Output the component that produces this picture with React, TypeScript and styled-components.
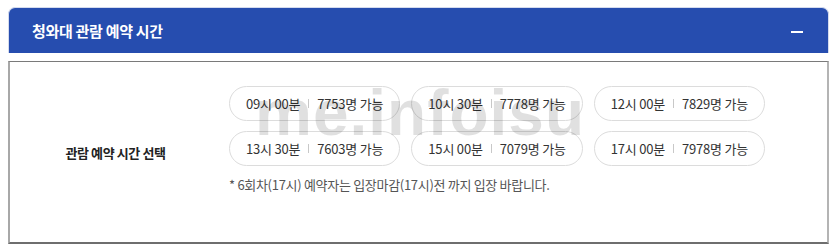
import * as React from 'react';
import styled, { createGlobalStyle } from 'styled-components';

const GlobalStyle = createGlobalStyle`
  * { box-sizing: border-box; }
  body {
    margin: 0;
    background: #fff;
    font-family: "Noto Sans CJK KR", "Noto Sans", sans-serif;
  }
`;

const slots = [
  { time: '09시 00분', count: '7753명 가능' },
  { time: '10시 30분', count: '7778명 가능' },
  { time: '12시 00분', count: '7829명 가능' },
  { time: '13시 30분', count: '7603명 가능' },
  { time: '15시 00분', count: '7079명 가능' },
  { time: '17시 00분', count: '7978명 가능' },
];

const Page = styled.div`
  padding: 7px 8px 0 8px;
  width: 837px;
  position: relative;
`;

const Header = styled.div`
  height: 46px;
  background: #264daf;
  border: 1px solid #d4dbee;
  border-bottom: none;
  border-radius: 7px 7px 0 0;
  display: flex;
  align-items: center;
  justify-content: space-between;
  padding: 0 25px 0 23px;
`;

const Title = styled.h2`
  margin: 0;
  color: #fff;
  font-size: 15px;
  font-weight: 700;
  letter-spacing: -0.3px;
`;

const Minus = styled.span`
  display: block;
  width: 12px;
  height: 2px;
  background: #fff;
  margin-top: 2px;
`;

const Body = styled.div`
  margin-top: 8px;
  height: 183px;
  border: 1px solid #7a7a7a;
  border-left: 2px solid #a8a8a8;
  border-right: 2px solid #b4b4b4;
  border-bottom: 2px solid #6e6e6e;
  display: grid;
  grid-template-columns: 211px 1fr;
  align-items: center;
`;

const Label = styled.div`
  text-align: center;
  font-size: 13px;
  font-weight: 700;
  color: #222;
  letter-spacing: -0.4px;
`;

const Content = styled.div`
  align-self: start;
  padding: 24px 0 0 8px;
`;

const SlotList = styled.div`
  display: flex;
  flex-wrap: wrap;
  column-gap: 11px;
  row-gap: 10px;
  width: 560px;
`;

const Slot = styled.button`
  height: 35px;
  padding: 0 16px;
  border: 1px solid #dcdcdc;
  border-radius: 18px;
  background: transparent;
  display: flex;
  align-items: center;
  font-family: inherit;
  font-size: 13px;
  color: #333;
  letter-spacing: -0.2px;
  cursor: pointer;
`;

const Divider = styled.span`
  display: inline-block;
  width: 1px;
  height: 9px;
  background: #c8c8c8;
  margin: 0 8px;
`;

const Note = styled.p`
  margin: 9px 0 0 0;
  font-size: 13px;
  color: #555;
  letter-spacing: -0.3px;
`;

const Watermark = styled.div`
  position: absolute;
  left: 255px;
  top: 76px;
  font-family: "Liberation Sans", Arial, sans-serif;
  font-weight: 700;
  font-size: 64px;
  letter-spacing: 1px;
  color: rgba(0, 0, 0, 0.12);
  pointer-events: none;
  user-select: none;
`;

export default function App() {
  return (
    <Page>
      <GlobalStyle />
      <Header>
        <Title>청와대 관람 예약 시간</Title>
        <Minus />
      </Header>
      <Body>
        <Label>관람 예약 시간 선택</Label>
        <Content>
          <SlotList>
            {slots.map((s) => (
              <Slot key={s.time}>
                {s.time}
                <Divider />
                {s.count}
              </Slot>
            ))}
          </SlotList>
          <Note>* 6회차(17시) 예약자는 입장마감(17시)전 까지 입장 바랍니다.</Note>
        </Content>
      </Body>
      <Watermark>me.infoisu</Watermark>
    </Page>
  );
}
